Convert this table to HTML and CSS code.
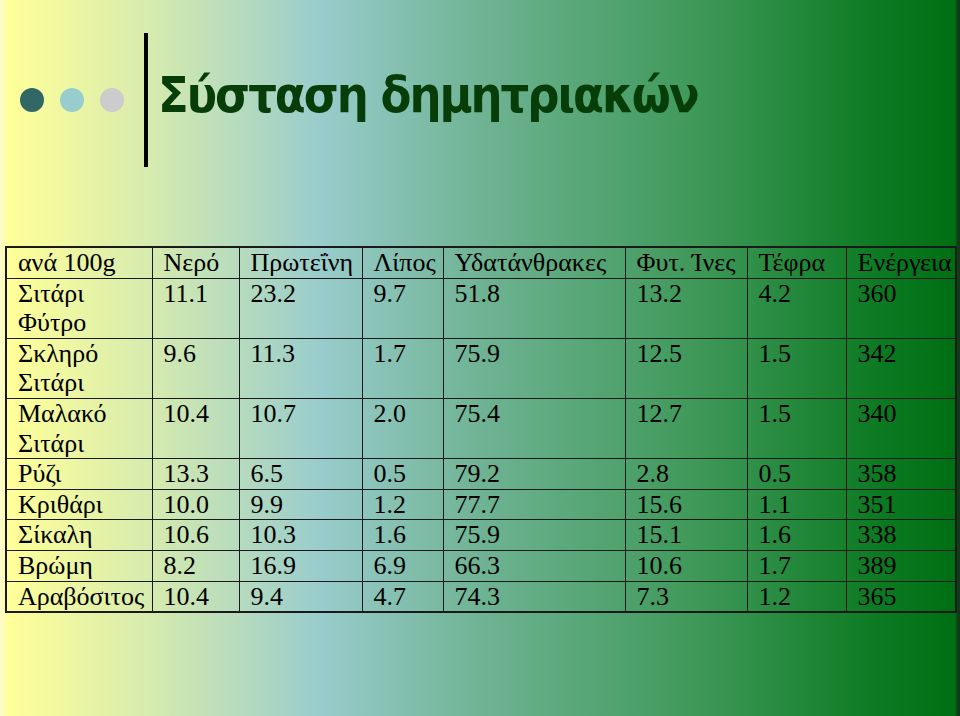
FILE: index.html
```html
<!DOCTYPE html>
<html lang="el">
<head>
<meta charset="utf-8">
<title>Σύσταση δημητριακών</title>
<link rel="stylesheet" href="styles.css">
</head>
<body>
<div class="slide">
  <div class="header">
    <div class="dots">
      <span class="dot dot-dark"></span>
      <span class="dot dot-light"></span>
      <span class="dot dot-grey"></span>
    </div>
    <div class="bar"></div>
    <h1 class="title">Σύσταση δημητριακών</h1>
  </div>
  <table class="data">
    <colgroup>
      <col class="c1"><col class="c2"><col class="c3"><col class="c4"><col class="c5"><col class="c6"><col class="c7"><col class="c8">
    </colgroup>
    <tr><td>ανά 100g</td><td>Νερό</td><td>Πρωτεΐνη</td><td>Λίπος</td><td>Υδατάνθρακες</td><td>Φυτ. Ίνες</td><td>Τέφρα</td><td>Ενέργεια</td></tr>
    <tr><td>Σιτάρι<br>Φύτρο</td><td>11.1</td><td>23.2</td><td>9.7</td><td>51.8</td><td>13.2</td><td>4.2</td><td>360</td></tr>
    <tr><td>Σκληρό<br>Σιτάρι</td><td>9.6</td><td>11.3</td><td>1.7</td><td>75.9</td><td>12.5</td><td>1.5</td><td>342</td></tr>
    <tr><td>Μαλακό<br>Σιτάρι</td><td>10.4</td><td>10.7</td><td>2.0</td><td>75.4</td><td>12.7</td><td>1.5</td><td>340</td></tr>
    <tr><td>Ρύζι</td><td>13.3</td><td>6.5</td><td>0.5</td><td>79.2</td><td>2.8</td><td>0.5</td><td>358</td></tr>
    <tr><td>Κριθάρι</td><td>10.0</td><td>9.9</td><td>1.2</td><td>77.7</td><td>15.6</td><td>1.1</td><td>351</td></tr>
    <tr><td>Σίκαλη</td><td>10.6</td><td>10.3</td><td>1.6</td><td>75.9</td><td>15.1</td><td>1.6</td><td>338</td></tr>
    <tr><td>Βρώμη</td><td>8.2</td><td>16.9</td><td>6.9</td><td>66.3</td><td>10.6</td><td>1.7</td><td>389</td></tr>
    <tr><td>Αραβόσιτος</td><td>10.4</td><td>9.4</td><td>4.7</td><td>74.3</td><td>7.3</td><td>1.2</td><td>365</td></tr>
  </table>
</div>
</body>
</html>
```

FILE: styles.css
```css
html, body {
  margin: 0;
  padding: 0;
}
body {
  width: 960px;
  height: 716px;
  overflow: hidden;
}
.slide {
  width: 960px;
  height: 716px;
  box-sizing: border-box;
  background: linear-gradient(to right, #fbfbd0 0px, #ffff99 8px, #d6ebae 150px, #99cccc 320px, #6fb394 480px, #3e9858 700px, #0c7a22 880px, #006e12 955px, #14381a 958px);
  overflow: hidden;
}
.header {
  display: flex;
  align-items: center;
  height: 134px;
  padding: 33px 0 0 20px;
}
.dots {
  display: flex;
  gap: 16px;
}
.dot {
  display: block;
  width: 24px;
  height: 24px;
  border-radius: 50%;
}
.dot-dark { background: #336666; }
.dot-light { background: #99cccc; }
.dot-grey { background: #cccccc; }
.bar {
  width: 4px;
  height: 134px;
  background: #000;
  margin-left: 20px;
}
.title {
  margin: 0 0 10px 10px;
  font-family: "DejaVu Sans", sans-serif;
  font-weight: bold;
  font-stretch: condensed;
  font-size: 50px;
  color: #063d08;
  letter-spacing: -2px;
  white-space: nowrap;
}
.data {
  margin: 79px 0 0 5px;
  border-collapse: collapse;
  table-layout: fixed;
  width: 950px;
  font-family: "Liberation Serif", "Times New Roman", serif;
  font-size: 26px;
  line-height: 29.6px;
  color: #000;
  border: 2px solid #1a1a1a;
}
.data td {
  border: 1px solid #1a1a1a;
  padding: 0 0 0 11px;
  vertical-align: top;
  white-space: nowrap;
}
.c1 { width: 146px; }
.c2 { width: 87px; }
.c3 { width: 123px; }
.c4 { width: 81px; }
.c5 { width: 182px; }
.c6 { width: 122px; }
.c7 { width: 99px; }
.c8 { width: 110px; }
```
